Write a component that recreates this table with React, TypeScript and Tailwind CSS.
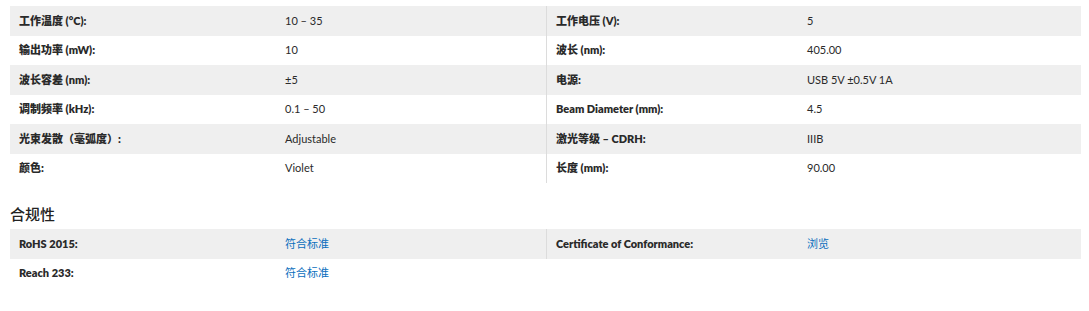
const specsLeft: [string, string][] = [
  ['工作温度 (°C):', '10 – 35'],
  ['输出功率 (mW):', '10'],
  ['波长容差 (nm):', '±5'],
  ['调制频率 (kHz):', '0.1 – 50'],
  ['光束发散（毫弧度）:', 'Adjustable'],
  ['颜色:', 'Violet'],
];

const specsRight: [string, string][] = [
  ['工作电压 (V):', '5'],
  ['波长 (nm):', '405.00'],
  ['电源:', 'USB 5V ±0.5V 1A'],
  ['Beam Diameter (mm):', '4.5'],
  ['激光等级 – CDRH:', 'IIIB'],
  ['长度 (mm):', '90.00'],
];

const font = { fontFamily: 'Lato, "Noto Sans CJK SC", sans-serif' };

const Row = ({ label, value, index, side, link }: { label: string; value: string; index: number; side: 'left' | 'right'; link?: boolean }) => (
  <div className={`flex items-center h-[29.5px] ${index % 2 === 0 ? 'bg-[#efefef]' : 'bg-white'}`}>
    <div className={`${side === 'left' ? 'w-[266px]' : 'w-[251px]'} pl-[9px] font-extrabold text-[11px] text-[#2a2a2a]`}>{label}</div>
    <div className={`pl-[9px] text-[11px] ${link ? 'text-[#0a6ebd]' : 'text-[#2a2a2a]'}`}>{value}</div>
  </div>
);

export default function App() {
  return (
    <div className="bg-white w-[1089px] h-[311px] pl-[10px] pt-[6px]" style={font}>
      <div className="flex w-[1071px]">
        <div className="w-[536px]">
          {specsLeft.map(([l, v], i) => (
            <Row key={l} label={l} value={v} index={i} side="left" />
          ))}
        </div>
        <div className="flex-1 border-l border-[#dcdcdc]">
          {specsRight.map(([l, v], i) => (
            <Row key={l} label={l} value={v} index={i} side="right" />
          ))}
        </div>
      </div>
      <h3 className="mt-[23px] mb-[7px] text-[15px] leading-[16px] text-[#222] font-medium">合规性</h3>
      <div className="flex w-[1071px] items-start">
        <div className="w-[536px]">
          <Row label="RoHS 2015:" value="符合标准" index={0} side="left" link />
          <Row label="Reach 233:" value="符合标准" index={1} side="left" link />
        </div>
        <div className="flex-1 border-l border-[#dcdcdc]">
          <Row label="Certificate of Conformance:" value="浏览" index={0} side="right" link />
        </div>
      </div>
    </div>
  );
}
